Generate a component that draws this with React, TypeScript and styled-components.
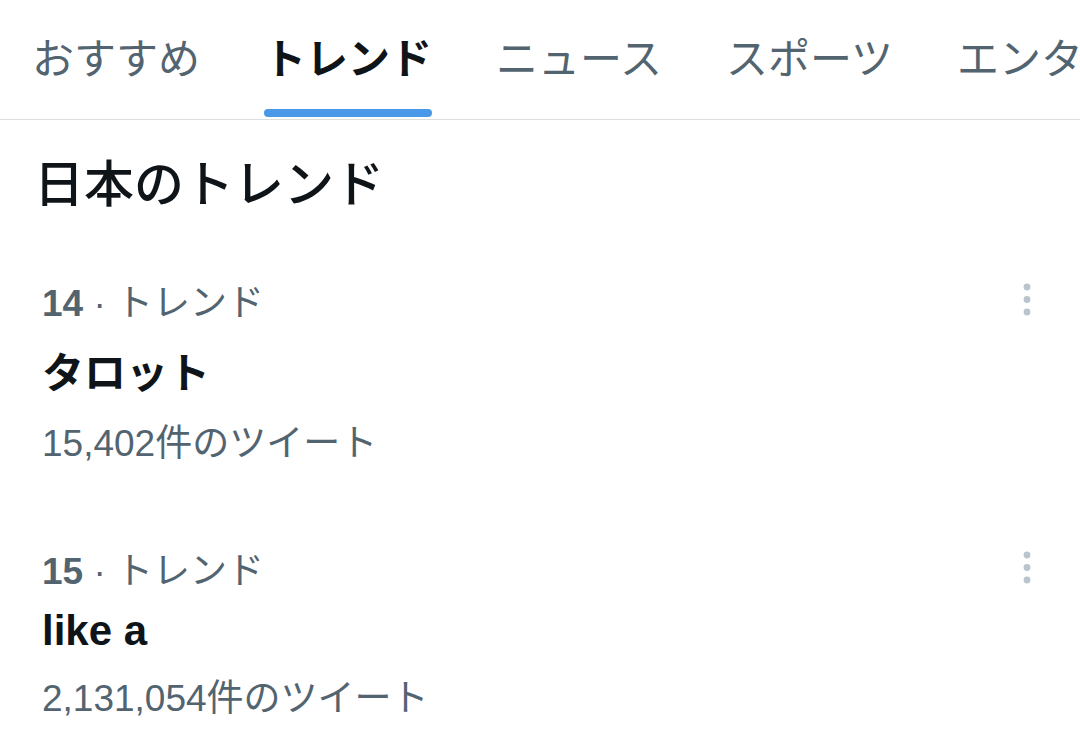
import React from "react";
import styled, { createGlobalStyle } from "styled-components";

const GlobalStyle = createGlobalStyle`
  html, body {
    margin: 0;
    padding: 0;
    background: #ffffff;
  }
  body {
    font-family: "Liberation Sans", "Noto Sans CJK JP", sans-serif;
    color: #0f1419;
    overflow: hidden;
  }
`;

const Page = styled.div`
  width: 1080px;
  min-height: 750px;
  background: #ffffff;
`;

const TabBar = styled.nav`
  display: flex;
  flex-wrap: nowrap;
  height: 119px;
  border-bottom: 1px solid #dcdfe2;
  overflow: hidden;
`;

const Tab = styled.div<{ $active?: boolean }>`
  flex-shrink: 0;
  display: flex;
  flex-direction: column;
  align-items: stretch;
  padding: 0 32px;
  height: 100%;
  font-size: 42px;
  font-weight: ${(p) => (p.$active ? 700 : 400)};
  color: ${(p) => (p.$active ? "#0f1419" : "#536471")};
  white-space: nowrap;
`;

const TabLabel = styled.span`
  flex: 1;
  display: flex;
  align-items: center;
  padding-top: 2px;
`;

const Indicator = styled.div<{ $visible?: boolean }>`
  height: 8px;
  margin-bottom: 2px;
  border-radius: 4px;
  background: ${(p) => (p.$visible ? "#4a99e9" : "transparent")};
`;

const Heading = styled.h2`
  margin: 0;
  padding: 24px 34px 20px;
  font-size: 50px;
  line-height: normal;
  font-weight: 500;
  color: #0f1419;
`;

const TrendRow = styled.div`
  display: flex;
  align-items: flex-start;
  padding: 37px 33px 37px 42px;
`;

const TrendBody = styled.div`
  flex: 1;
  display: flex;
  flex-direction: column;
`;

const Meta = styled.div`
  font-size: 37px;
  line-height: normal;
  color: #536471;
`;

const Rank = styled.span`
  font-weight: 700;
`;

const Title = styled.div`
  margin-top: 12px;
  font-size: 42px;
  line-height: normal;
  font-weight: 700;
  color: #0f1419;
`;

const Count = styled.div`
  margin-top: 13px;
  font-size: 37px;
  line-height: normal;
  color: #536471;
`;

const MoreButton = styled.button`
  width: 40px;
  height: 54px;
  padding: 0;
  border: none;
  background: none;
  display: flex;
  align-items: center;
  justify-content: center;
  color: #b9c4ce;
`;

const MoreIcon = () => (
  <svg width="8" height="34" viewBox="0 0 8 34" fill="currentColor">
    <circle cx="4" cy="4" r="3.4" />
    <circle cx="4" cy="16.5" r="3.4" />
    <circle cx="4" cy="29" r="3.4" />
  </svg>
);

const tabs = ["おすすめ", "トレンド", "ニュース", "スポーツ", "エンターテイメント"];

const trends = [
  { rank: 14, title: "タロット", count: "15,402件のツイート" },
  { rank: 15, title: "like a", count: "2,131,054件のツイート" },
];

export default function App() {
  return (
    <Page>
      <GlobalStyle />
      <TabBar>
        {tabs.map((t, i) => (
          <Tab key={t} $active={i === 1}>
            <TabLabel>{t}</TabLabel>
            <Indicator $visible={i === 1} />
          </Tab>
        ))}
      </TabBar>
      <Heading>日本のトレンド</Heading>
      {trends.map((t) => (
        <TrendRow key={t.rank}>
          <TrendBody>
            <Meta>
              <Rank>{t.rank}</Rank> · トレンド
            </Meta>
            <Title>{t.title}</Title>
            <Count>{t.count}</Count>
          </TrendBody>
          <MoreButton aria-label="その他">
            <MoreIcon />
          </MoreButton>
        </TrendRow>
      ))}
    </Page>
  );
}
